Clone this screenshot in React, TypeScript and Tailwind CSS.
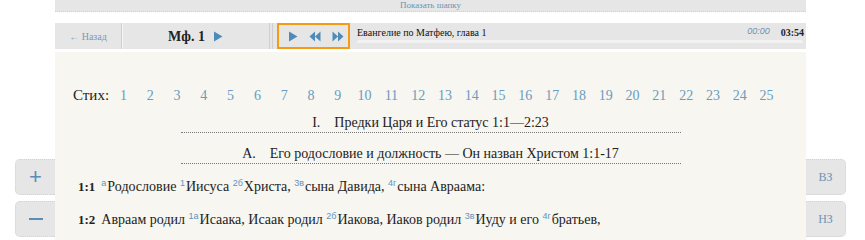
import React from 'react'

const serif = { fontFamily: '"Liberation Serif", "DejaVu Serif", serif' }

const Sup = ({ children }: { children: React.ReactNode }) => (
  <sup className="text-[9px] text-[#5b95c2] font-['Liberation_Sans'] relative -top-[5px] mr-[1px]">{children}</sup>
)

const Play = () => (
  <svg width="10" height="11" viewBox="0 0 10 11"><path d="M1 0.5 L9.5 5.5 L1 10.5 Z" fill="#4d8cb8" /></svg>
)

const Rewind = () => (
  <svg width="12" height="11" viewBox="0 0 12 11"><path d="M6 0.5 L0.5 5.5 L6 10.5 Z M11.5 0.5 L6 5.5 L11.5 10.5 Z" fill="#4d8cb8" /></svg>
)

const Forward = () => (
  <svg width="12" height="11" viewBox="0 0 12 11"><path d="M0.5 0.5 L6 5.5 L0.5 10.5 Z M6 0.5 L11.5 5.5 L6 10.5 Z" fill="#4d8cb8" /></svg>
)

const SideButton = ({ children, side }: { children: React.ReactNode; side: 'left' | 'right' }) => (
  <div
    className={`w-[40px] h-[36px] flex items-center justify-center bg-[#e6e6e6] border border-dotted border-[#d2d2d2] ${
      side === 'left' ? 'rounded-l-[5px] border-r-0' : 'rounded-r-[5px] border-l-0'
    }`}
  >
    {children}
  </div>
)

export default function App() {
  const verses = Array.from({ length: 25 }, (_, i) => i + 1)

  return (
    <div className="relative w-[865px] h-[240px] overflow-hidden bg-white" style={serif}>
      <div className="ml-[55px] w-[751px]">
        {/* Показать шапку */}
        <div className="h-[12px] bg-[#e6e6e6] border-b border-dotted border-[#cfcfcf] flex items-center justify-center">
          <span className="text-[9px] leading-none text-[#6f93b3]">Показать шапку</span>
        </div>

        {/* Плеер */}
        <div className="mt-[11px] h-[26px] bg-[#e6e6e6] flex items-stretch">
          <div className="w-[67px] flex items-center justify-center border-r border-[#cfcfcf] shadow-[1px_0_0_#f5f5f5]">
            <span className="text-[10px] text-[#7a9ab5]">← Назад</span>
          </div>
          <div className="w-[148px] flex items-center justify-center gap-[8px] border-r border-[#cfcfcf]">
            <span className="text-[14px] font-bold text-[#222]">Мф. 1</span>
            <Play />
          </div>
          <div className="w-[2px] border-r border-[#cfcfcf] ml-[1px]" />
          <div className="ml-[4px] w-[73px] h-[26px] border-2 border-[#f59a12] flex items-center justify-center gap-[11px] pl-[4px]">
            <Play />
            <Rewind />
            <Forward />
          </div>
          <div className="flex-1 pl-[7px] pr-[2px] flex flex-col">
            <div className="flex items-center justify-between h-[17px] pt-[1px]">
              <span className="text-[10px] text-[#111]">Евангелие по Матфею, глава 1</span>
              <div className="flex items-center gap-[11px]">
                <span className="text-[9px] italic text-[#6f93b3] font-['Liberation_Sans']">00:00</span>
                <span className="text-[10px] font-bold text-[#222]">03:54</span>
              </div>
            </div>
            <div className="h-[3px] bg-[#f2f2f2] rounded-full mr-[1px]" />
          </div>
        </div>

        {/* Текст */}
        <div className="mt-[3px] h-[188px] bg-[#f7f6f0] text-[#222]">
          <div className="pt-[34px] pl-[18px] flex items-center h-[52px] text-[15px]">
            <span className="w-[37px]">Стих:</span>
            {verses.map((n) => (
              <span key={n} className="w-[26.8px] text-center text-[#6a9bc0] text-[14px]">
                {n}
              </span>
            ))}
          </div>

          <div className="mt-[10px] flex flex-col items-center">
            <div className="w-[500px] text-center text-[14px] leading-[18px] border-b border-dotted border-[#777]">
              <span className="mr-[14px]">I.</span>Предки Царя и Его статус 1:1—2:23
            </div>
            <div className="mt-[12px] w-[500px] text-center text-[14px] leading-[18px] border-b border-dotted border-[#777]">
              <span className="mr-[14px]">А.</span>Его родословие и должность — Он назван Христом 1:1-17
            </div>
          </div>

          <div className="pl-[23px] mt-[13px] text-[14px] leading-[20px]">
            <p>
              <b className="text-[13px] mr-[6px]">1:1</b>
              <Sup>а</Sup>Родословие <Sup>1</Sup>Иисуса <Sup>2б</Sup>Христа, <Sup>3в</Sup>сына Давида, <Sup>4г</Sup>сына Авраама:
            </p>
            <p className="mt-[13px]">
              <b className="text-[13px] mr-[6px]">1:2</b>
              Авраам родил <Sup>1а</Sup>Исаака, Исаак родил <Sup>2б</Sup>Иакова, Иаков родил <Sup>3в</Sup>Иуду и его <Sup>4г</Sup>братьев,
            </p>
          </div>
        </div>
      </div>

      {/* Кнопки шрифта и заветов */}
      <div className="absolute left-[15px] top-[159px] flex flex-col gap-[6px]">
        <SideButton side="left">
          <span className="text-[22px] leading-none text-[#5b8db5] font-['Liberation_Sans']">+</span>
        </SideButton>
        <SideButton side="left">
          <span className="block w-[14px] h-[2px] bg-[#5b8db5]" />
        </SideButton>
      </div>
      <div className="absolute left-[806px] top-[159px] flex flex-col gap-[6px]">
        <SideButton side="right">
          <span className="text-[12px] text-[#6f93b3]">ВЗ</span>
        </SideButton>
        <SideButton side="right">
          <span className="text-[12px] text-[#6f93b3]">НЗ</span>
        </SideButton>
      </div>
    </div>
  )
}
